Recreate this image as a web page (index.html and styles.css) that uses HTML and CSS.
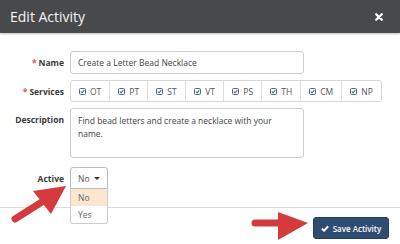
FILE: index.html
```html
<!DOCTYPE html>
<html lang="en">
<head>
  <meta charset="UTF-8">
  <title>Edit Activity</title>
  <link rel="stylesheet" href="styles.css">
</head>
<body>
  <div class="modal">
    <div class="modal-header">
      <h1 class="modal-title">Edit Activity</h1>
      <svg class="close-icon" width="8" height="8" viewBox="0 0 10 10">
        <path d="M1.5 1.5 L8.5 8.5 M8.5 1.5 L1.5 8.5" stroke="#fff" stroke-width="2.8" stroke-linecap="round"/>
      </svg>
    </div>

    <div class="modal-body">
      <div class="form-row">
        <label class="form-label"><span class="req">*</span>Name</label>
        <input type="text" class="form-control" value="Create a Letter Bead Necklace">
      </div>

      <div class="form-row">
        <label class="form-label"><span class="req">*</span>Services</label>
        <div class="services">
          <div class="service"><svg class="chk" viewBox="0 0 10 10"><rect x="0.75" y="0.75" width="8.5" height="8.5" rx="1.5" fill="none" stroke="#4a5f86" stroke-width="1.4"/><path d="M2.6 5.1 L4.4 6.8 L7.6 3.2" fill="none" stroke="#4a5f86" stroke-width="1.6"/></svg>OT</div>
          <div class="service"><svg class="chk" viewBox="0 0 10 10"><rect x="0.75" y="0.75" width="8.5" height="8.5" rx="1.5" fill="none" stroke="#4a5f86" stroke-width="1.4"/><path d="M2.6 5.1 L4.4 6.8 L7.6 3.2" fill="none" stroke="#4a5f86" stroke-width="1.6"/></svg>PT</div>
          <div class="service"><svg class="chk" viewBox="0 0 10 10"><rect x="0.75" y="0.75" width="8.5" height="8.5" rx="1.5" fill="none" stroke="#4a5f86" stroke-width="1.4"/><path d="M2.6 5.1 L4.4 6.8 L7.6 3.2" fill="none" stroke="#4a5f86" stroke-width="1.6"/></svg>ST</div>
          <div class="service"><svg class="chk" viewBox="0 0 10 10"><rect x="0.75" y="0.75" width="8.5" height="8.5" rx="1.5" fill="none" stroke="#4a5f86" stroke-width="1.4"/><path d="M2.6 5.1 L4.4 6.8 L7.6 3.2" fill="none" stroke="#4a5f86" stroke-width="1.6"/></svg>VT</div>
          <div class="service"><svg class="chk" viewBox="0 0 10 10"><rect x="0.75" y="0.75" width="8.5" height="8.5" rx="1.5" fill="none" stroke="#4a5f86" stroke-width="1.4"/><path d="M2.6 5.1 L4.4 6.8 L7.6 3.2" fill="none" stroke="#4a5f86" stroke-width="1.6"/></svg>PS</div>
          <div class="service"><svg class="chk" viewBox="0 0 10 10"><rect x="0.75" y="0.75" width="8.5" height="8.5" rx="1.5" fill="none" stroke="#4a5f86" stroke-width="1.4"/><path d="M2.6 5.1 L4.4 6.8 L7.6 3.2" fill="none" stroke="#4a5f86" stroke-width="1.6"/></svg>TH</div>
          <div class="service"><svg class="chk" viewBox="0 0 10 10"><rect x="0.75" y="0.75" width="8.5" height="8.5" rx="1.5" fill="none" stroke="#4a5f86" stroke-width="1.4"/><path d="M2.6 5.1 L4.4 6.8 L7.6 3.2" fill="none" stroke="#4a5f86" stroke-width="1.6"/></svg>CM</div>
          <div class="service"><svg class="chk" viewBox="0 0 10 10"><rect x="0.75" y="0.75" width="8.5" height="8.5" rx="1.5" fill="none" stroke="#4a5f86" stroke-width="1.4"/><path d="M2.6 5.1 L4.4 6.8 L7.6 3.2" fill="none" stroke="#4a5f86" stroke-width="1.6"/></svg>NP</div>
        </div>
      </div>

      <div class="form-row form-row-top">
        <label class="form-label">Description</label>
        <div class="form-control textarea">Find bead letters and create a necklace with your name.</div>
      </div>

      <div class="form-row form-row-active">
        <label class="form-label">Active</label>
        <div class="select-wrap">
          <div class="select">No <span class="caret"></span></div>
          <ul class="select-menu">
            <li class="selected">No</li>
            <li>Yes</li>
          </ul>
        </div>
      </div>
    </div>

    <div class="modal-footer">
      <button class="btn-save">
        <svg width="8" height="7" viewBox="0 0 10 8"><path d="M1 4.2 L3.8 6.8 L9 1.2" fill="none" stroke="#fff" stroke-width="2.4"/></svg>
        Save Activity
      </button>
    </div>

    <!-- annotation arrows -->
    <svg class="arrows" width="400" height="244" viewBox="0 0 400 244">
      <path d="M15 219 L45 200" stroke="#d43a3e" stroke-width="7" stroke-linecap="round"/>
      <polygon points="66,186 33,191 51,214" fill="#d43a3e"/>
      <path d="M255 223 L282 223" stroke="#d43a3e" stroke-width="7" stroke-linecap="round"/>
      <polygon points="308,223 278,212 278,240" fill="#d43a3e"/>
    </svg>
  </div>
</body>
</html>
```

FILE: styles.css
```css
* {
  box-sizing: border-box;
  margin: 0;
  padding: 0;
}

body {
  font-family: 'Open Sans', 'Liberation Sans', sans-serif;
  color: #333;
  background-color: #fff;
  width: 400px;
  height: 244px;
  overflow: hidden;
}

.modal {
  position: relative;
  height: 244px;
}

.modal-header {
  height: 33px;
  background-color: #47494b;
  display: flex;
  align-items: center;
  justify-content: space-between;
  padding: 0 17px 0 10px;
  box-shadow: 0 1px 2px rgba(0, 0, 0, 0.25);
}

.modal-title {
  font-size: 14px;
  font-weight: 400;
  color: #f4f4f4;
}

.close-icon {
  display: block;
}

.modal-body {
  padding: 18px 0 18px 0;
  display: flex;
  flex-direction: column;
  gap: 6px;
}

.form-row {
  display: flex;
  align-items: center;
  gap: 6px;
}

.form-row-top {
  align-items: flex-start;
}

.form-row-active {
  margin-top: 3px;
}

.form-label {
  width: 64px;
  text-align: right;
  font-size: 8.5px;
  font-weight: 700;
  color: #3a3a3a;
  flex-shrink: 0;
}

.form-row-top .form-label {
  padding-top: 6px;
}

.req {
  color: #d9534f;
  margin-right: 2px;
}

.form-control {
  width: 234px;
  height: 23px;
  border: 1px solid #ccc;
  border-radius: 3px;
  padding: 0 7px;
  font-family: inherit;
  font-size: 8.5px;
  color: #444;
  outline: none;
}

.textarea {
  height: 50px;
  padding: 5px 7px;
  line-height: 13px;
}

.services {
  display: flex;
  border: 1px solid #d6d6d6;
  border-radius: 3px;
  height: 22px;
}

.service {
  display: flex;
  align-items: center;
  gap: 4px;
  padding: 0 8px 0 8px;
  min-width: 38px;
  font-size: 8.5px;
  color: #555;
  border-left: 1px solid #ddd;
}

.service:first-child {
  border-left: none;
}

.chk {
  width: 7px;
  height: 7px;
}

.select-wrap {
  position: relative;
}

.select {
  width: 38px;
  height: 22px;
  border: 1px solid #bbb;
  border-radius: 3px 3px 0 0;
  display: flex;
  align-items: center;
  justify-content: space-between;
  padding: 0 7px 0 7px;
  font-size: 8.5px;
  color: #555;
}

.caret {
  width: 0;
  height: 0;
  border-left: 3px solid transparent;
  border-right: 3px solid transparent;
  border-top: 3px solid #333;
}

.select-menu {
  position: absolute;
  top: 22px;
  left: 0;
  width: 38px;
  list-style: none;
  background-color: #fff;
  border: 1px solid #ccc;
  border-top: none;
  border-radius: 0 0 3px 3px;
  z-index: 2;
}

.select-menu li {
  font-size: 8.5px;
  color: #666;
  padding: 0 7px;
  height: 17px;
  line-height: 17px;
}

.select-menu li.selected {
  background-color: #fde6d0;
}

.modal-footer {
  border-top: 1px solid #ddd;
  display: flex;
  justify-content: flex-end;
  padding: 9px 11px 0 0;
}

.btn-save {
  display: flex;
  align-items: center;
  justify-content: center;
  gap: 4px;
  width: 76px;
  height: 22px;
  padding: 0;
  white-space: nowrap;
  background-color: #2f4d72;
  border: 1px solid #253e5c;
  border-radius: 3px;
  color: #fff;
  font-family: inherit;
  font-size: 8px;
  font-weight: 600;
}

.arrows {
  position: absolute;
  left: 0;
  top: 0;
  pointer-events: none;
  z-index: 3;
}
```
